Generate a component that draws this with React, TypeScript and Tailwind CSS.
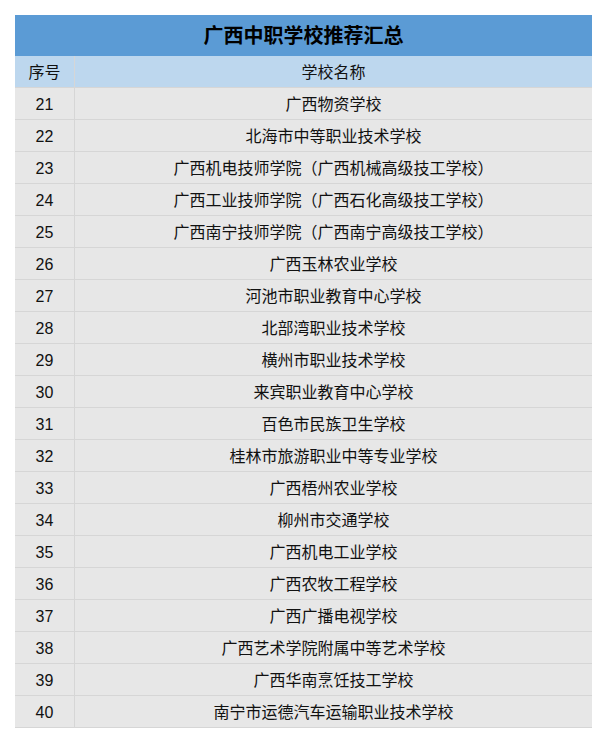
import React from "react";

const rows: [number, string][] = [
  [21, "广西物资学校"],
  [22, "北海市中等职业技术学校"],
  [23, "广西机电技师学院（广西机械高级技工学校）"],
  [24, "广西工业技师学院（广西石化高级技工学校）"],
  [25, "广西南宁技师学院（广西南宁高级技工学校）"],
  [26, "广西玉林农业学校"],
  [27, "河池市职业教育中心学校"],
  [28, "北部湾职业技术学校"],
  [29, "横州市职业技术学校"],
  [30, "来宾职业教育中心学校"],
  [31, "百色市民族卫生学校"],
  [32, "桂林市旅游职业中等专业学校"],
  [33, "广西梧州农业学校"],
  [34, "柳州市交通学校"],
  [35, "广西机电工业学校"],
  [36, "广西农牧工程学校"],
  [37, "广西广播电视学校"],
  [38, "广西艺术学院附属中等艺术学校"],
  [39, "广西华南烹饪技工学校"],
  [40, "南宁市运德汽车运输职业技术学校"],
];

export default function App() {
  return (
    <div
      className="w-[607px] h-[744px] bg-white pt-[15px] pl-[15px] text-[#111]"
      style={{ fontFamily: '"Liberation Sans", "Noto Sans CJK SC", sans-serif' }}
    >
      <div className="w-[577px]">
        <div className="h-[41px] bg-[#5b9bd5] flex items-center justify-center pt-[1px] text-[20px] font-bold text-black">
          广西中职学校推荐汇总
        </div>
        <div className="h-[32px] bg-[#bdd7ee] flex text-[16px] border-b border-[#d6d6d6]">
          <div className="w-[60px] flex items-center justify-center pt-[2px] border-r border-[#d6d6d6]">序号</div>
          <div className="flex-1 flex items-center justify-center pt-[2px]">学校名称</div>
        </div>
        {rows.map(([n, name]) => (
          <div key={n} className="h-[32px] bg-[#e7e7e7] flex text-[16px] border-b border-[#d6d6d6]">
            <div className="w-[60px] flex items-center justify-center pt-[2px] border-r border-[#d6d6d6]">{n}</div>
            <div className="flex-1 flex items-center justify-center pt-[2px]">{name}</div>
          </div>
        ))}
      </div>
    </div>
  );
}
